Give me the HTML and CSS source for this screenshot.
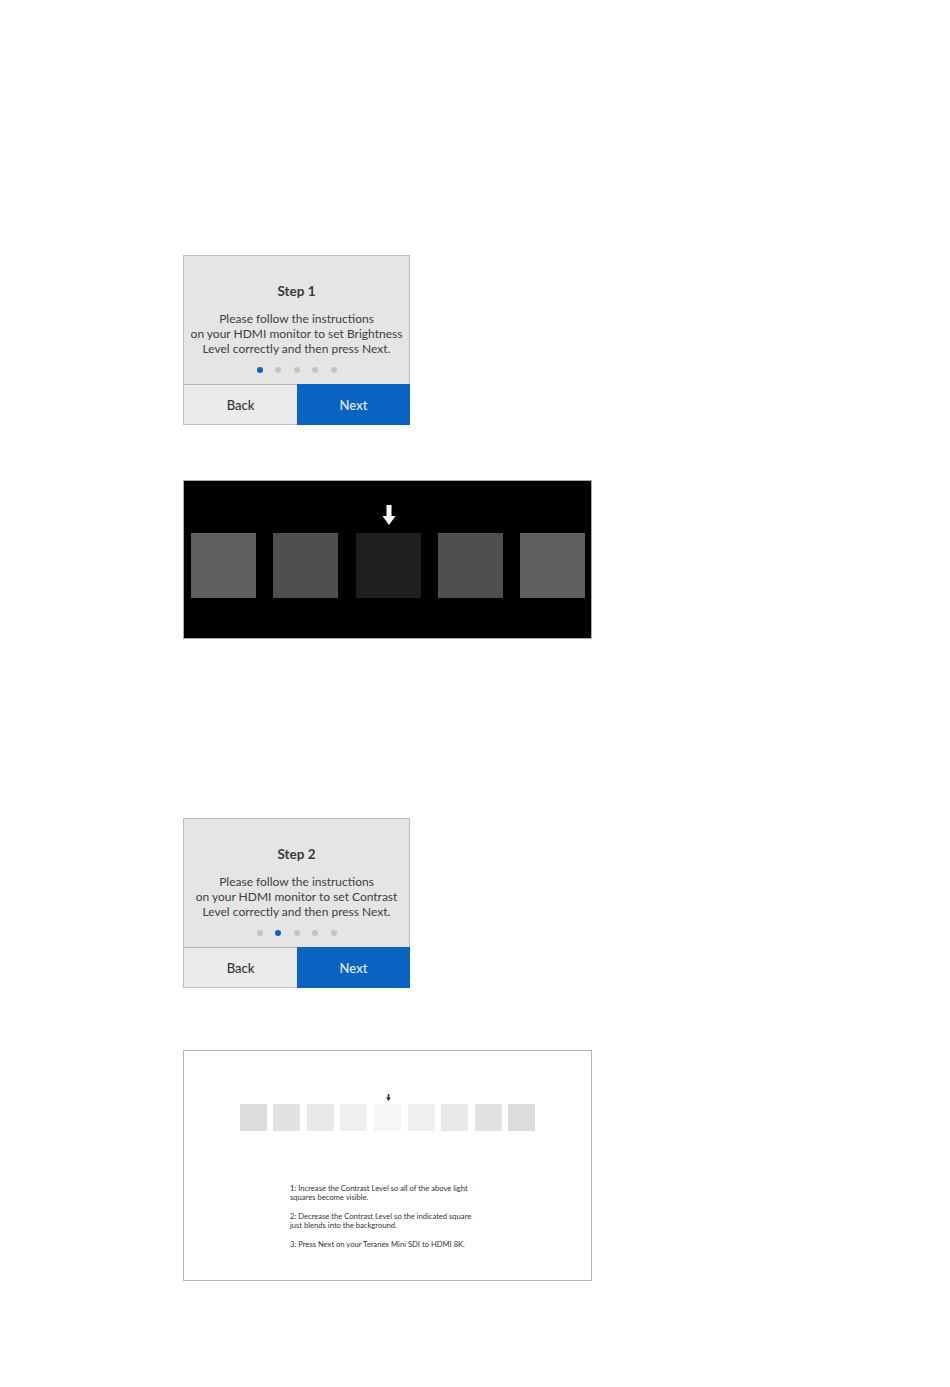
FILE: index.html
```html
<!DOCTYPE html>
<html lang="en">
<head>
    <meta charset="UTF-8">
    <meta name="viewport" content="width=device-width, initial-scale=1.0">
    <title>Setup steps</title>
    <link rel="stylesheet" href="styles.css">
</head>
<body>
    <div class="page">
        <div class="card">
            <div class="card-body">
                <h2>Step 1</h2>
                <p>Please follow the instructions<br>on your HDMI monitor to set Brightness<br>Level correctly and then press Next.</p>
                <div class="dots">
                    <span class="dot active"></span>
                    <span class="dot"></span>
                    <span class="dot"></span>
                    <span class="dot"></span>
                    <span class="dot"></span>
                </div>
            </div>
            <div class="card-buttons">
                <div class="btn back">Back</div>
                <div class="btn next">Next</div>
            </div>
        </div>

        <div class="panel-dark">
            <svg class="arrow-big" width="14" height="20" viewBox="0 0 14 20">
                <path d="M4.5 0H9.5V11H13.5L7 20L0.5 11H4.5Z" fill="#fff"></path>
            </svg>
            <div class="dark-squares">
                <div class="dsq s1"></div>
                <div class="dsq s2"></div>
                <div class="dsq s3"></div>
                <div class="dsq s2"></div>
                <div class="dsq s1"></div>
            </div>
        </div>

        <div class="card second">
            <div class="card-body">
                <h2>Step 2</h2>
                <p>Please follow the instructions<br>on your HDMI monitor to set Contrast<br>Level correctly and then press Next.</p>
                <div class="dots">
                    <span class="dot"></span>
                    <span class="dot active"></span>
                    <span class="dot"></span>
                    <span class="dot"></span>
                    <span class="dot"></span>
                </div>
            </div>
            <div class="card-buttons">
                <div class="btn back">Back</div>
                <div class="btn next">Next</div>
            </div>
        </div>

        <div class="panel-light">
            <svg class="arrow-small" width="5" height="7" viewBox="0 0 5 7">
                <path d="M1.7 0H3.3V3.6H5L2.5 7L0 3.6H1.7Z" fill="#333"></path>
            </svg>
            <div class="light-squares">
                <div class="lsq l1"></div>
                <div class="lsq l2"></div>
                <div class="lsq l3"></div>
                <div class="lsq l4"></div>
                <div class="lsq l5"></div>
                <div class="lsq l4"></div>
                <div class="lsq l3"></div>
                <div class="lsq l2"></div>
                <div class="lsq l1"></div>
            </div>
            <div class="notes">
                <p>1: Increase the Contrast Level so all of the above light<br>squares become visible.</p>
                <p>2: Decrease the Contrast Level so the indicated square<br>just blends into the background.</p>
                <p>3: Press Next on your Teranex Mini SDI to HDMI 8K.</p>
            </div>
        </div>
    </div>
</body>
</html>
```

FILE: styles.css
```css
body {
    margin: 0;
    background: #fff;
    font-family: Lato, "Open Sans", sans-serif;
    color: #333;
}

.page {
    display: flex;
    flex-direction: column;
    align-items: flex-start;
    padding: 255px 0 106px 183px;
}

.card {
    width: 227px;
    height: 170px;
    box-sizing: border-box;
    border: 1px solid #bdbdbd;
    background: #e5e5e5;
    display: flex;
    flex-direction: column;
}

.card.second {
    margin-top: 179px;
}

.card-body {
    flex: 1;
    text-align: center;
    padding-top: 27px;
}

.card-body h2 {
    margin: 0 0 11px;
    font-size: 13.5px;
    line-height: 17px;
    font-weight: 700;
    color: #3a3a3a;
}

.card-body p {
    margin: 0;
    font-size: 12px;
    line-height: 15px;
    color: #404040;
    white-space: nowrap;
}

.dots {
    display: flex;
    justify-content: center;
    gap: 12.5px;
    margin-top: 11px;
}

.dot {
    width: 6px;
    height: 6px;
    border-radius: 50%;
    background: #c4c4c4;
}

.dot.active {
    background: #0a63c0;
}

.card-buttons {
    display: flex;
    height: 40px;
    box-sizing: border-box;
    border-top: 1px solid #b5b5b5;
    font-size: 13px;
    font-weight: 500;
}

.btn {
    flex: 1;
    display: flex;
    align-items: center;
    justify-content: center;
}

.btn.back {
    background: #ebebeb;
    color: #333;
}

.btn.next {
    background: #0a63c0;
    color: #e6eef8;
    margin: -1px -1px -1px 0;
}

.panel-dark {
    width: 409px;
    height: 159px;
    box-sizing: border-box;
    margin-top: 55px;
    border: 1px solid #aaa;
    background: #000;
    padding: 24px 6px 0 7px;
    display: flex;
    flex-direction: column;
    align-items: center;
}

.arrow-big {
    margin: 0 0 8px 2px;
}

.dark-squares {
    display: flex;
    justify-content: space-between;
    width: 100%;
}

.dsq {
    width: 65px;
    height: 65px;
}

.s1 { background: #5f5f5f; }
.s2 { background: #4e4e4e; }
.s3 { background: #1f1f1f; }

.panel-light {
    width: 409px;
    height: 231px;
    box-sizing: border-box;
    margin-top: 62px;
    border: 1px solid #b5b5b5;
    background: #fff;
    padding-top: 43px;
    display: flex;
    flex-direction: column;
    align-items: center;
}

.arrow-small {
    margin: 0 0 3px 2px;
}

.light-squares {
    display: flex;
    gap: 6.6px;
}

.lsq {
    width: 27px;
    height: 27px;
}

.l1 { background: #dcdcdc; }
.l2 { background: #e2e2e2; }
.l3 { background: #e9e9e9; }
.l4 { background: #efefef; }
.l5 { background: #f6f6f6; }

.notes {
    align-self: flex-start;
    margin: 53px 0 0 106px;
    font-size: 7.62px;
    line-height: 9.4px;
    color: #333;
}

.notes p {
    margin: 0 0 9px;
    white-space: nowrap;
}
```
